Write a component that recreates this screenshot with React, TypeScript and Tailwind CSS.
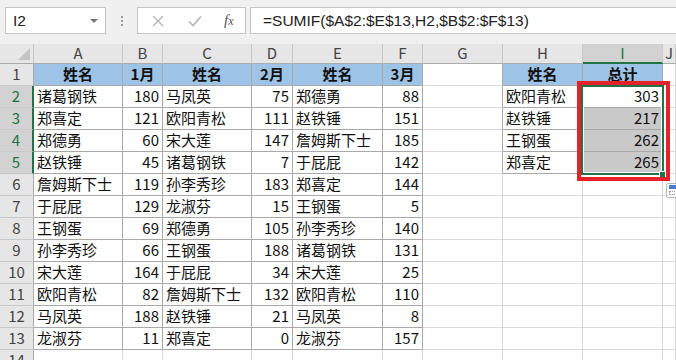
import React from "react"

const COLS = ["A", "B", "C", "D", "E", "F", "G", "H", "I", "J"]

const table: (string | number)[][] = [
  ["诸葛钢铁", 180, "马凤英", 75, "郑德勇", 88],
  ["郑喜定", 121, "欧阳青松", 111, "赵铁锤", 151],
  ["郑德勇", 60, "宋大莲", 147, "詹姆斯下士", 185],
  ["赵铁锤", 45, "诸葛钢铁", 7, "于屁屁", 142],
  ["詹姆斯下士", 119, "孙李秀珍", 183, "郑喜定", 144],
  ["于屁屁", 129, "龙淑芬", 15, "王钢蛋", 5],
  ["王钢蛋", 69, "郑德勇", 105, "孙李秀珍", 140],
  ["孙李秀珍", 66, "王钢蛋", 188, "诸葛钢铁", 131],
  ["宋大莲", 164, "于屁屁", 34, "宋大莲", 25],
  ["欧阳青松", 82, "詹姆斯下士", 132, "欧阳青松", 110],
  ["马凤英", 188, "赵铁锤", 21, "马凤英", 8],
  ["龙淑芬", 11, "郑喜定", 0, "龙淑芬", 157],
]

const summary: [string, number][] = [
  ["欧阳青松", 303],
  ["赵铁锤", 217],
  ["王钢蛋", 262],
  ["郑喜定", 265],
]

function cellValue(r: number, c: number): string | number | null {
  if (r === 1) {
    const heads: Record<number, string> = { 1: "姓名", 2: "1月", 3: "姓名", 4: "2月", 5: "姓名", 6: "3月", 8: "姓名", 9: "总计" }
    return heads[c] ?? null
  }
  if (c >= 1 && c <= 6 && r <= 13) return table[r - 2][c - 1]
  if ((c === 8 || c === 9) && r <= 5) return summary[r - 2][c - 8]
  return null
}

function Cell({ r, c }: { r: number; c: number }) {
  const inT1 = r <= 13 && c >= 1 && c <= 6
  const inT2 = r <= 5 && (c === 8 || c === 9)
  const darkRight = inT1 || inT2 || (c === 7 && r <= 5)
  const darkBottom = inT1 || inT2
  const header = r === 1 && (inT1 || inT2)
  const selGray = c === 9 && r >= 3 && r <= 5
  const v = cellValue(r, c)
  const isNum = typeof v === "number"

  return (
    <div
      className={[
        "flex items-center overflow-visible whitespace-nowrap border-r border-b px-[3px] text-[15px] text-[#111]",
        darkRight ? "border-r-[#a9a9a9]" : "border-r-[#dadada]",
        darkBottom ? "border-b-[#a9a9a9]" : "border-b-[#dadada]",
        header ? "justify-center bg-[#9dc3e6] font-bold" : selGray ? "bg-[#c9c9c9]" : "bg-white",
        isNum ? "justify-end" : "",
      ].join(" ")}
    >
      {v}
    </div>
  )
}

export default function App() {
  const rows = Array.from({ length: 14 }, (_, i) => i + 1)

  return (
    <div className="h-[360px] w-[676px] overflow-hidden bg-[#f0f0f0] font-['Noto_Sans_CJK_SC',sans-serif]">
      {/* Formula bar */}
      <div className="flex h-[44px] items-start pt-[7px] pl-[5px]">
        <div className="flex h-[27px] w-[101px] items-center justify-between border border-[#c6c6c6] bg-white pr-[7px] pl-[7px] font-['Liberation_Sans','Noto_Sans_CJK_SC',sans-serif] text-[15.5px] text-[#222]">
          <span>I2</span>
          <span className="h-0 w-0 border-x-[4px] border-t-[4px] border-x-transparent border-t-[#777]" />
        </div>
        <div className="flex h-[27px] w-[31px] flex-col items-center justify-center gap-[2px]">
          <span className="h-[2px] w-[2px] bg-[#9a9a9a]" />
          <span className="h-[2px] w-[2px] bg-[#9a9a9a]" />
          <span className="h-[2px] w-[2px] bg-[#9a9a9a]" />
        </div>
        <div className="flex h-[27px] w-[109px] items-center border border-[#c6c6c6] bg-white">
          <svg className="ml-[14px]" width="12" height="12" viewBox="0 0 12 12">
            <path d="M1 1L11 11M11 1L1 11" stroke="#b4b4b4" strokeWidth="1.4" fill="none" />
          </svg>
          <svg className="ml-[24px]" width="14" height="12" viewBox="0 0 14 12">
            <path d="M1 6.5L5 10.5L13 1.5" stroke="#b4b4b4" strokeWidth="1.6" fill="none" />
          </svg>
          <span className="ml-[22px] font-['Liberation_Serif',serif] text-[15px] italic text-[#555]">
            f<span className="text-[12px]">x</span>
          </span>
        </div>
        <div className="ml-[4px] flex h-[27px] flex-1 items-center border border-r-0 border-[#c6c6c6] bg-white pl-[12px] font-['Liberation_Sans',sans-serif] text-[15.5px] text-[#222]">
          =SUMIF($A$2:$E$13,H2,$B$2:$F$13)
        </div>
      </div>

      {/* Sheet grid */}
      <div className="relative grid grid-cols-[34px_89px_40px_89px_41px_90px_40px_80px_80px_80px_1fr] grid-rows-[20px_repeat(14,22px)]">
        {/* corner */}
        <div className="flex items-end justify-end border-r border-b border-r-[#c8c8c8] border-b-[#ababab] bg-[#e6e6e6] pr-[3px] pb-[3px]">
          <svg width="12" height="12" viewBox="0 0 12 12">
            <path d="M12 0L12 12L0 12Z" fill="#c4c4c4" />
          </svg>
        </div>
        {COLS.map((l) => (
          <div
            key={l}
            className={
              l === "I"
                ? "flex items-center justify-center border-r border-b-2 border-r-[#c8c8c8] border-b-[#217346] bg-[#d2d2d2] text-[15px] text-[#217346]"
                : "flex items-center justify-center border-r border-b border-r-[#c8c8c8] border-b-[#ababab] bg-[#e6e6e6] text-[15px] text-[#444]"
            }
          >
            {l}
          </div>
        ))}
        {rows.map((r) => (
          <React.Fragment key={r}>
            <div
              className={
                r >= 2 && r <= 5
                  ? "flex items-center justify-center border-r-2 border-b border-r-[#217346] border-b-[#c8c8c8] bg-[#d2d2d2] text-[15px] text-[#217346]"
                  : "flex items-center justify-center border-r border-b border-r-[#ababab] border-b-[#c8c8c8] bg-[#e6e6e6] text-[15px] text-[#444]"
              }
            >
              {r}
            </div>
            {COLS.map((_, i) => (
              <Cell key={i} r={r} c={i + 1} />
            ))}
          </React.Fragment>
        ))}

        {/* selection I2:I5 */}
        <div className="pointer-events-none absolute top-[41px] left-[581px] h-[90px] w-[83px] border-2 border-[#217346]">
          <div className="h-full w-full border border-white" />
        </div>
        {/* fill handle */}
        <div className="absolute top-[127px] left-[659px] h-[7px] w-[7px] border border-white bg-[#217346]" />
        {/* highlight box */}
        <div className="pointer-events-none absolute top-[37px] left-[577px] h-[100px] w-[93px] border-4 border-[#e3222a]" />
        {/* quick analysis */}
        <div className="absolute top-[139px] left-[666px] h-[15px] w-[14px] rounded-[2px] border border-[#b8b8b8] bg-white">
          <div className="mt-[1px] ml-[2px] h-[4px] w-[8px] bg-[#4a7bd0]" />
          <div className="mt-[2px] ml-[2px] h-[4px] w-[8px] border border-dotted border-[#999]" />
        </div>
      </div>
    </div>
  )
}
